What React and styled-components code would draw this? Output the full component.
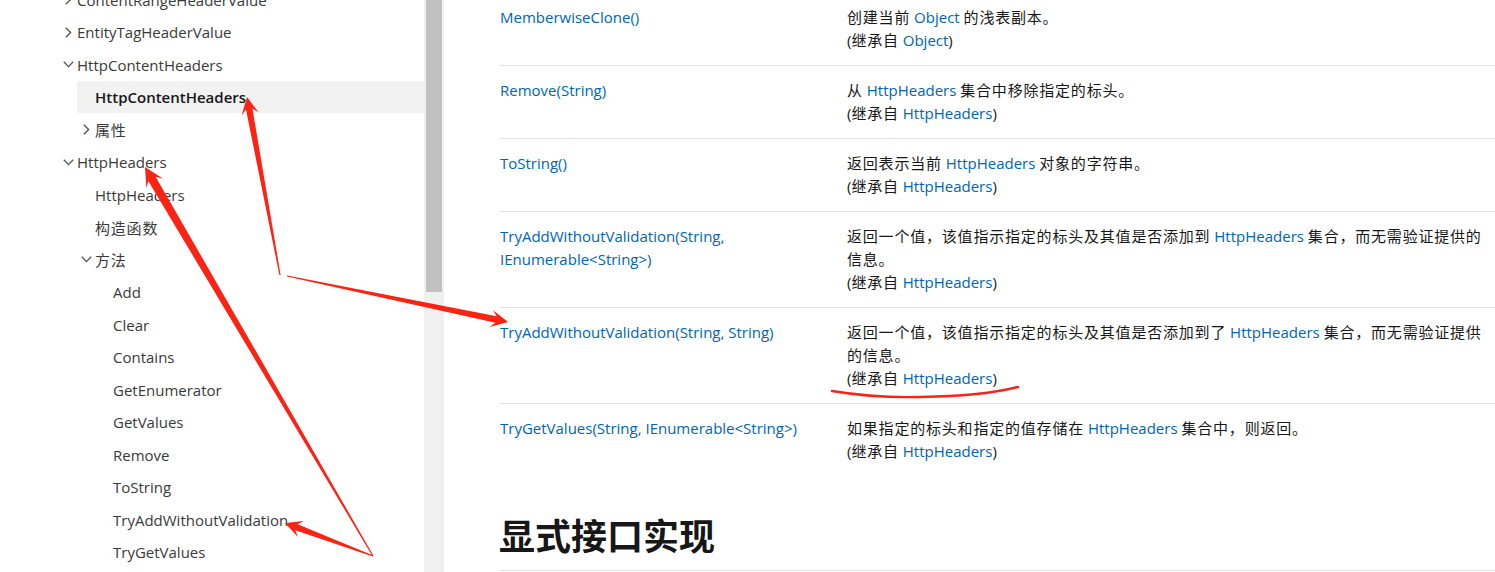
import React from 'react'
import styled, { createGlobalStyle } from 'styled-components'

const GlobalStyle = createGlobalStyle`
  html, body {
    margin: 0;
    padding: 0;
    background: #ffffff;
    overflow: hidden;
  }
  body {
    font-family: "Open Sans", "Noto Sans CJK SC", sans-serif;
    color: #171717;
  }
`;

const navItems = [
  { label: 'ContentRangeHeaderValue', level: 1, chevron: 'right' },
  { label: 'EntityTagHeaderValue', level: 1, chevron: 'right' },
  { label: 'HttpContentHeaders', level: 1, chevron: 'down' },
  { label: 'HttpContentHeaders', level: 2, active: true },
  { label: '属性', level: 2, chevron: 'right' },
  { label: 'HttpHeaders', level: 1, chevron: 'down' },
  { label: 'HttpHeaders', level: 2 },
  { label: '构造函数', level: 2 },
  { label: '方法', level: 2, chevron: 'down' },
  { label: 'Add', level: 3 },
  { label: 'Clear', level: 3 },
  { label: 'Contains', level: 3 },
  { label: 'GetEnumerator', level: 3 },
  { label: 'GetValues', level: 3 },
  { label: 'Remove', level: 3 },
  { label: 'ToString', level: 3 },
  { label: 'TryAddWithoutValidation', level: 3 },
  { label: 'TryGetValues', level: 3 },
];

// text parts: strings are plain, {link} are blue
const methods = [
  {
    name: ['MemberwiseClone()'],
    desc: [['创建当前 ', { link: 'Object' }, ' 的浅表副本。']],
    from: 'Object',
  },
  {
    name: ['Remove(String)'],
    desc: [['从 ', { link: 'HttpHeaders' }, ' 集合中移除指定的标头。']],
    from: 'HttpHeaders',
  },
  {
    name: ['ToString()'],
    desc: [['返回表示当前 ', { link: 'HttpHeaders' }, ' 对象的字符串。']],
    from: 'HttpHeaders',
  },
  {
    name: ['TryAddWithoutValidation(String,', 'IEnumerable<String>)'],
    desc: [
      ['返回一个值，该值指示指定的标头及其值是否添加到 ', { link: 'HttpHeaders' }, ' 集合，而无需验证提供的'],
      ['信息。'],
    ],
    from: 'HttpHeaders',
  },
  {
    name: ['TryAddWithoutValidation(String, String)'],
    desc: [
      ['返回一个值，该值指示指定的标头及其值是否添加到了 ', { link: 'HttpHeaders' }, ' 集合，而无需验证提供'],
      ['的信息。'],
    ],
    from: 'HttpHeaders',
  },
  {
    name: ['TryGetValues(String, IEnumerable<String>)'],
    desc: [['如果指定的标头和指定的值存储在 ', { link: 'HttpHeaders' }, ' 集合中，则返回。']],
    from: 'HttpHeaders',
  },
];

// the original page's CJK font runs a bit wider than Noto's, so Chinese runs get some tracking
const cjkRe = /([\u3000-\u9fff\uff00-\uffef]+)/;
function Mixed({ text }) {
  return text.split(cjkRe).map((seg, i) =>
    i % 2 === 1 ? <Cjk key={i}>{seg}</Cjk> : seg
  );
}

function Chevron({ dir }) {
  if (dir === 'down') {
    return (
      <svg width="11" height="7" viewBox="0 0 11 7">
        <polyline points="0.8,0.8 5.5,5.6 10.2,0.8" fill="none" stroke="#505050" strokeWidth="1.3" />
      </svg>
    );
  }
  return (
    <svg width="7" height="11" viewBox="0 0 7 11">
      <polyline points="0.8,0.8 5.6,5.5 0.8,10.2" fill="none" stroke="#505050" strokeWidth="1.3" />
    </svg>
  );
}

// tapered screenshot-style arrow, thin at tail, head at tip
function arrowPoints(tail, tip, headLen = 17, headW = 17, neckW = 6.5, tailW = 1.2) {
  const dx = tip[0] - tail[0];
  const dy = tip[1] - tail[1];
  const len = Math.hypot(dx, dy);
  const ux = dx / len;
  const uy = dy / len;
  const nx = -uy;
  const ny = ux;
  const at = (d, w) => [tip[0] - ux * d + nx * w, tip[1] - uy * d + ny * w];
  const pts = [
    [tail[0] + nx * tailW / 2, tail[1] + ny * tailW / 2],
    at(headLen * 0.72, neckW / 2),
    at(headLen, headW / 2),
    tip,
    at(headLen, -headW / 2),
    at(headLen * 0.72, -neckW / 2),
    [tail[0] - nx * tailW / 2, tail[1] - ny * tailW / 2],
  ];
  return pts.map((p) => p.map((v) => v.toFixed(1)).join(',')).join(' ');
}

function Annotations() {
  const red = '#fa2314';
  return (
    <Overlay width="1495" height="572" viewBox="0 0 1495 572">
      <polygon points={arrowPoints([280, 275], [247, 97])} fill={red} />
      <polygon points={arrowPoints([287, 276], [508, 322])} fill={red} />
      <polygon points={arrowPoints([373, 556], [145, 167], 19, 19, 8.5)} fill={red} />
      <polygon points={arrowPoints([373, 556], [285, 523])} fill={red} />
      <path
        d="M832,391 C850,394 880,398 920,397 S990,394 1018,387"
        fill="none"
        stroke={red}
        strokeWidth="2.4"
        strokeLinecap="round"
      />
    </Overlay>
  );
}

function Line({ parts }) {
  return (
    <DescLine>
      {parts.map((p, i) =>
        typeof p === 'string' ? <Mixed key={i} text={p} /> : <Link key={i}>{p.link}</Link>
      )}
    </DescLine>
  );
}

export default function App() {
  return (
    <>
      <GlobalStyle />
      <Page>
        <Sidebar>
          <NavPanel>
            <NavList>
              {navItems.map((item, i) => (
                <NavRow key={i} $level={item.level} $active={item.active}>
                  <ChevronSlot>{item.chevron && <Chevron dir={item.chevron} />}</ChevronSlot>
                  <NavLabel $active={item.active}>
                    <Mixed text={item.label} />
                  </NavLabel>
                </NavRow>
              ))}
            </NavList>
          </NavPanel>
          <ScrollTrack>
            <ScrollThumb />
          </ScrollTrack>
        </Sidebar>

        <Main>
          <Table>
            {methods.map((m, i) => (
              <Row key={i} $last={i === methods.length - 1}>
                <NameCell>
                  {m.name.map((n, j) => (
                    <Link key={j} as="div">{n}</Link>
                  ))}
                </NameCell>
                <DescCell>
                  {m.desc.map((parts, j) => (
                    <Line key={j} parts={parts} />
                  ))}
                  <Line parts={['(继承自 ', { link: m.from }, ')']} />
                </DescCell>
              </Row>
            ))}
          </Table>
          <Heading>
            <Mixed text="显式接口实现" />
          </Heading>
        </Main>
        <Annotations />
      </Page>
    </>
  );
}

const Page = styled.div`
  position: relative;
  display: flex;
  width: 1495px;
  height: 572px;
  overflow: hidden;
`;

const Sidebar = styled.aside`
  display: flex;
  flex: 0 0 444px;
  height: 572px;
`;

const NavPanel = styled.nav`
  width: 424px;
  overflow: hidden;
`;

const NavList = styled.div`
  margin-top: -16.75px;
  margin-left: 77px;
`;

const NavRow = styled.div`
  display: flex;
  align-items: center;
  height: 32.5px;
  padding-left: ${(p) => (p.$level - 1) * 18}px;
  background: ${(p) => (p.$active ? '#f2f2f2' : 'transparent')};
  font-size: 15px;
`;

const ChevronSlot = styled.span`
  display: flex;
  align-items: center;
  justify-content: center;
  width: 14px;
  margin-left: -16px;
  margin-right: 2px;
  height: 14px;
`;

const NavLabel = styled.span`
  color: ${(p) => (p.$active ? '#171717' : '#3a3a3a')};
  font-weight: ${(p) => (p.$active ? 600 : 400)};
  white-space: nowrap;
`;

const Cjk = styled.span`
  letter-spacing: 0.8px;
`;

const ScrollTrack = styled.div`
  width: 20px;
  height: 572px;
  background: #f0f0f0;
  padding: 0 2px;
  box-sizing: border-box;
`;

const ScrollThumb = styled.div`
  height: 292px;
  background: #c1c1c1;
`;

const Main = styled.main`
  flex: 1;
  padding-left: 55px;
  margin-top: -7px;
`;

const Table = styled.div`
  display: flex;
  flex-direction: column;
`;

const Row = styled.div`
  display: grid;
  grid-template-columns: 348px 1fr;
  padding: 13px 0;
  border-bottom: ${(p) => (p.$last ? 'none' : '1px solid #e3e3e3')};
  font-size: 15px;
  line-height: 23px;
`;

const NameCell = styled.div`
  padding-left: 1px;
`;

const DescCell = styled.div``;

const DescLine = styled.div`
  white-space: nowrap;
  color: #171717;
`;

const Link = styled.span`
  color: #0065b3;
`;

const Heading = styled.h2`
  margin: 37px 0 0;
  padding-bottom: 9px;
  font-size: 36px;
  line-height: 48px;
  font-weight: 700;
  color: #171717;
  border-bottom: 1px solid #e3e3e3;

  ${Cjk} {
    letter-spacing: 0;
  }
`;

const Overlay = styled.svg`
  position: absolute;
  left: 0;
  top: 0;
  pointer-events: none;
`;
